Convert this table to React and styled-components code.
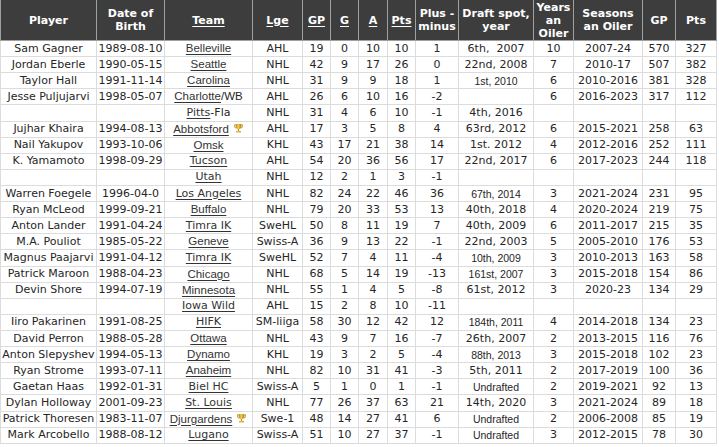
import styled, { createGlobalStyle } from "styled-components";

const GlobalStyle = createGlobalStyle`
  html, body {
    margin: 0;
    padding: 0;
    background: #ffffff;
  }
`;

const COLS = [96, 68, 88, 50, 28, 28, 29, 28, 43, 75, 40, 69, 33, 41];

const HEADERS = [
  { label: "Player" },
  { label: "Date of Birth" },
  { label: "Team", link: true },
  { label: "Lge", link: true },
  { label: "GP", link: true },
  { label: "G", link: true },
  { label: "A", link: true },
  { label: "Pts", link: true },
  { label: "Plus - minus" },
  { label: "Draft spot, year" },
  { label: "Years an Oiler" },
  { label: "Seasons an Oiler" },
  { label: "GP" },
  { label: "Pts" },
];

// team: [linked part, rest, arial?, trophy?]
const ROWS = [
  ["Sam Gagner", "1989-08-10", ["Belleville", "", true], "AHL", 19, 0, 10, 10, 1, ["6th,\u00a0 2007"], 10, "2007-24", 570, 327],
  ["Jordan Eberle", "1990-05-15", ["Seattle", "", true], "NHL", 42, 9, 17, 26, 0, ["22nd, 2008"], 7, "2010-17", 507, 382],
  ["Taylor Hall", "1991-11-14", ["Carolina", "", true], "NHL", 31, 9, 9, 18, 1, ["1st, 2010", true], 6, "2010-2016", 381, 328],
  ["Jesse Puljujarvi", "1998-05-07", ["Charlotte", "/WB", true], "AHL", 26, 6, 10, 16, -2, [""], 6, "2016-2023", 317, 112],
  ["", "", ["Pitts", "-Fla"], "NHL", 31, 4, 6, 10, -1, ["4th, 2016"], "", "", "", ""],
  ["Jujhar Khaira", "1994-08-13", ["Abbotsford", "", true, true], "AHL", 17, 3, 5, 8, 4, ["63rd, 2012"], 6, "2015-2021", 258, 63],
  ["Nail Yakupov", "1993-10-06", ["Omsk", "", true], "KHL", 43, 17, 21, 38, 14, ["1st. 2012"], 4, "2012-2016", 252, 111],
  ["K. Yamamoto", "1998-09-29", ["Tucson", ""], "AHL", 54, 20, 36, 56, 17, ["22nd, 2017"], 6, "2017-2023", 244, 118],
  ["", "", ["Utah", ""], "NHL", 12, 2, 1, 3, -1, [""], "", "", "", ""],
  ["Warren Foegele", "1996-04-0", ["Los Angeles", ""], "NHL", 82, 24, 22, 46, 36, ["67th, 2014", true], 3, "2021-2024", 231, 95],
  ["Ryan McLeod", "1999-09-21", ["Buffalo", "", true], "NHL", 79, 20, 33, 53, 13, ["40th, 2018"], 4, "2020-2024", 219, 75],
  ["Anton Lander", "1991-04-24", ["Timra IK", ""], "SweHL", 50, 8, 11, 19, 7, ["40th, 2009"], 6, "2011-2017", 215, 35],
  ["M.A. Pouliot", "1985-05-22", ["Geneve", "", true], "Swiss-A", 36, 9, 13, 22, -1, ["22nd, 2003"], 5, "2005-2010", 176, 53],
  ["Magnus Paajarvi", "1991-04-12", ["Timra IK", ""], "SweHL", 52, 7, 4, 11, -4, ["10th, 2009", true], 3, "2010-2013", 163, 58],
  ["Patrick Maroon", "1988-04-23", ["Chicago", "", true], "NHL", 68, 5, 14, 19, -13, ["161st, 2007", true], 3, "2015-2018", 154, 86],
  ["Devin Shore", "1994-07-19", ["Minnesota", "", true], "NHL", 55, 1, 4, 5, -8, ["61st, 2012"], 3, "2020-23", 134, 29],
  ["", "", ["Iowa Wild", ""], "AHL", 15, 2, 8, 10, -11, [""], "", "", "", ""],
  ["Iiro Pakarinen", "1991-08-25", ["HIFK", ""], "SM-liiga", 58, 30, 12, 42, 12, ["184th, 2011", true], 4, "2014-2018", 134, 23],
  ["David Perron", "1988-05-28", ["Ottawa", "", true], "NHL", 43, 9, 7, 16, -7, ["26th, 2007"], 2, "2013-2015", 116, 76],
  ["Anton Slepyshev", "1994-05-13", ["Dynamo", "", true], "KHL", 19, 3, 2, 5, -4, ["88th, 2013", true], 3, "2015-2018", 102, 23],
  ["Ryan Strome", "1993-07-11", ["Anaheim", "", true], "NHL", 82, 10, 31, 41, -3, ["5th, 2011"], 2, "2017-2019", 100, 36],
  ["Gaetan Haas", "1992-01-31", ["Biel HC", ""], "Swiss-A", 5, 1, 0, 1, -1, ["Undrafted", true], 2, "2019-2021", 92, 13],
  ["Dylan Holloway", "2001-09-23", ["St. Louis", ""], "NHL", 77, 26, 37, 63, 21, ["14th, 2020"], 3, "2021-2024", 89, 18],
  ["Patrick Thoresen", "1983-11-07", ["Djurgardens", "", true, true], "Swe-1", 48, 14, 27, 41, 6, ["Undrafted", true], 2, "2006-2008", 85, 19],
  ["Mark Arcobello", "1988-08-12", ["Lugano", ""], "Swiss-A", 51, 10, 27, 37, -1, ["Undrafted", true], 3, "2012-2015", 78, 30],
];

const Trophy = () => (
  <TrophyIcon viewBox="0 0 12 12" aria-hidden="true">
    <defs>
      <linearGradient id="cup" x1="0" x2="1" y1="0" y2="0">
        <stop offset="0" stopColor="#b8860b" />
        <stop offset="0.45" stopColor="#f3cf5a" />
        <stop offset="1" stopColor="#a97a10" />
      </linearGradient>
    </defs>
    <path d="M1.2 1.6h2v1.2h-1v0.6c0 1 .7 1.7 1.6 1.9l-.3.9C2.2 5.9 1.2 4.9 1.2 3.4z" fill="#c99a24" />
    <path d="M10.8 1.6h-2v1.2h1v0.6c0 1-.7 1.7-1.6 1.9l.3.9c1.3-.3 2.3-1.3 2.3-2.8z" fill="#c99a24" />
    <path d="M3 1h6v2.6c0 1.8-1.3 3.1-3 3.1S3 5.4 3 3.6z" fill="url(#cup)" />
    <rect x="5.3" y="6.6" width="1.4" height="2.2" fill="#c4921c" />
    <rect x="3.6" y="8.7" width="4.8" height="1.6" rx="0.3" fill="url(#cup)" />
  </TrophyIcon>
);

const TeamCell = ({ team }) => {
  const [linked, rest, alt, trophy] = team;
  return (
    <Cell>
      <TeamText $alt={alt}>
        <TeamLink>{linked}</TeamLink>
        {rest}
      </TeamText>
      {trophy && <Trophy />}
    </Cell>
  );
};

export default function App() {
  return (
    <>
      <GlobalStyle />
      <Table>
        <colgroup>
          {COLS.map((w, i) => (
            <col key={i} style={{ width: w }} />
          ))}
        </colgroup>
        <thead>
          <tr>
            {HEADERS.map((h, i) => (
              <HeadCell key={i} $link={h.link}>
                {h.label}
              </HeadCell>
            ))}
          </tr>
        </thead>
        <tbody>
          {ROWS.map((r, i) => (
            <Row key={i}>
              <Cell>{r[0]}</Cell>
              <Cell>{r[1]}</Cell>
              <TeamCell team={r[2]} />
              {r.slice(3, 9).map((v, j) => (
                <Cell key={j}>{v}</Cell>
              ))}
              <Cell $small={r[9][1]}>{r[9][0]}</Cell>
              {r.slice(10).map((v, j) => (
                <Cell key={"b" + j}>{v}</Cell>
              ))}
            </Row>
          ))}
        </tbody>
      </Table>
    </>
  );
}

const Table = styled.table`
  width: 716px;
  table-layout: fixed;
  border-collapse: collapse;
  font-family: "DejaVu Sans", Verdana, sans-serif;
  font-size: 11px;
  color: #262626;
`;

const Row = styled.tr`
  height: 16.12px;
`;

const HeadCell = styled.th`
  height: 40px;
  padding: 0 1px;
  background: #3d3d3d;
  color: #ffffff;
  font-weight: bold;
  font-size: 11px;
  line-height: 13px;
  text-align: center;
  vertical-align: middle;
  border: 1px solid #a0a0a0;
  border-top: none;
  text-decoration: ${({ $link }) => ($link ? "underline" : "none")};
  text-underline-offset: 2px;
`;

const Cell = styled.td`
  padding: 0;
  line-height: 14px;
  text-align: center;
  white-space: nowrap;
  overflow: hidden;
  border: 1px solid #dcdcdc;
  font-family: ${({ $small }) =>
    $small ? `"Liberation Sans", Arial, sans-serif` : "inherit"};
  font-size: ${({ $small }) => ($small ? "10.5px" : "11px")};
`;

const TeamText = styled.span`
  font-family: ${({ $alt }) =>
    $alt ? `"Liberation Sans", Arial, sans-serif` : "inherit"};
  font-size: ${({ $alt }) => ($alt ? "11.5px" : "11px")};
`;

const TeamLink = styled.span`
  text-decoration: underline;
  text-underline-offset: 2px;
  color: #333333;
`;

const TrophyIcon = styled.svg`
  width: 11px;
  height: 11px;
  margin-left: 4px;
  vertical-align: -1px;
`;
